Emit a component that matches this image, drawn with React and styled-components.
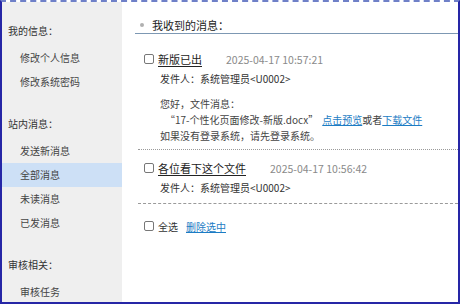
import React from 'react';
import styled, { createGlobalStyle } from 'styled-components';

const GlobalStyle = createGlobalStyle`
  html, body { margin: 0; padding: 0; background: #fff; }
  body {
    font-family: "Noto Sans CJK SC", "Noto Sans", sans-serif;
    color: #333;
  }
`;

const Frame = styled.div`
  width: 460px;
  height: 304px;
  box-sizing: border-box;
  border: 2px solid #2626a6;
  border-top: 2px dashed #6f80c8;
  display: flex;
  overflow: hidden;
`;

const Sidebar = styled.div`
  width: 120px;
  flex-shrink: 0;
  background: #efefef;
  padding-top: 16px;
  box-sizing: border-box;
`;

const SectionTitle = styled.div`
  font-size: 10px;
  line-height: 26px;
  padding-left: 6px;
  margin-top: ${p => p.$first ? 0 : '17px'};
  margin-bottom: 2px;
  color: #333;
`;

const NavItem = styled.div`
  font-size: 10px;
  line-height: 24px;
  padding-left: 18px;
  color: #444;
  background: ${p => p.$active ? '#cde0f6' : 'transparent'};
`;

const Main = styled.div`
  flex: 1;
  padding-top: 15px;
`;

const Header = styled.div`
  margin-left: 13px;
  display: flex;
  align-items: center;
  gap: 8px;
  padding-left: 5px;
  height: 16px;
  font-size: 11px;
  color: #222;
  border-bottom: 1px solid #7d98b3;
`;

const Bullet = styled.span`
  width: 4px;
  height: 4px;
  border-radius: 50%;
  background: #b0b0b0;
`;

const List = styled.div`
  margin-left: 16px;
  padding-top: 15px;
`;

const Message = styled.div`
  padding-top: ${p => p.$first ? 0 : '8px'};
  padding-bottom: 5px;
  border-bottom: 1px ${p => p.$dotted ? 'dotted' : 'dashed'} #9a9a9a;
`;

const Row = styled.div`
  display: flex;
  align-items: center;
  height: 20px;
  padding-left: 6px;
  font-size: 10.5px;
`;

const Check = styled.span`
  width: 8px;
  height: 8px;
  border: 1px solid #777;
  border-radius: 2px;
  background: #fff;
  margin-right: 4px;
  flex-shrink: 0;
`;

const Title = styled.span`
  font-size: 11px;
  color: #222;
  text-decoration: underline;
  text-underline-offset: 2px;
`;

const Time = styled.span`
  margin-left: 24px;
  color: #8a8a8a;
  font-size: 10.5px;
`;

const Sender = styled.div`
  padding-left: 22px;
  line-height: 20px;
  font-size: 10px;
  color: #333;
`;

const Body = styled.div`
  padding-left: 22px;
  margin-top: 7px;
  font-size: 10px;
  line-height: 16px;
  color: #444;
`;

const FileLine = styled.div`
  padding-left: 5px;
`;

const Link = styled.a`
  color: #1c7cc4;
  text-decoration: underline;
  margin-left: ${p => p.$gap || 0};
`;

const Footer = styled(Row)`
  margin-top: 12px;
  font-size: 10px;
`;

const FooterLabel = styled.span`
  margin-right: 8px;
  color: #333;
`;

function MessageItem({ title, time, first, dotted, children }) {
  return (
    <Message $first={first} $dotted={dotted}>
      <Row>
        <Check />
        <Title>{title}</Title>
        <Time>{time}</Time>
      </Row>
      <Sender>发件人：系统管理员&lt;U0002&gt;</Sender>
      {children}
    </Message>
  );
}

export default function App() {
  const nav = [
    { title: '我的信息：', items: ['修改个人信息', '修改系统密码'] },
    { title: '站内消息：', items: ['发送新消息', '全部消息', '未读消息', '已发消息'] },
    { title: '审核相关：', items: ['审核任务'] },
  ];
  return (
    <>
      <GlobalStyle />
      <Frame>
        <Sidebar>
          {nav.map((sec, i) => (
            <div key={sec.title}>
              <SectionTitle $first={i === 0}>{sec.title}</SectionTitle>
              {sec.items.map(item => (
                <NavItem key={item} $active={item === '全部消息'}>{item}</NavItem>
              ))}
            </div>
          ))}
        </Sidebar>
        <Main>
          <Header>
            <Bullet />
            我收到的消息：
          </Header>
          <List>
            <MessageItem title="新版已出" time="2025-04-17 10:57:21" first dotted>
              <Body>
                <div>您好，文件消息：</div>
                <FileLine>
                  “17-个性化页面修改-新版.docx”<Link $gap="4px">点击预览</Link>或者<Link>下载文件</Link>
                </FileLine>
                <div>如果没有登录系统，请先登录系统。</div>
              </Body>
            </MessageItem>
            <MessageItem title="各位看下这个文件" time="2025-04-17 10:56:42" />
            <Footer>
              <Check />
              <FooterLabel>全选</FooterLabel>
              <Link>删除选中</Link>
            </Footer>
          </List>
        </Main>
      </Frame>
    </>
  );
}
